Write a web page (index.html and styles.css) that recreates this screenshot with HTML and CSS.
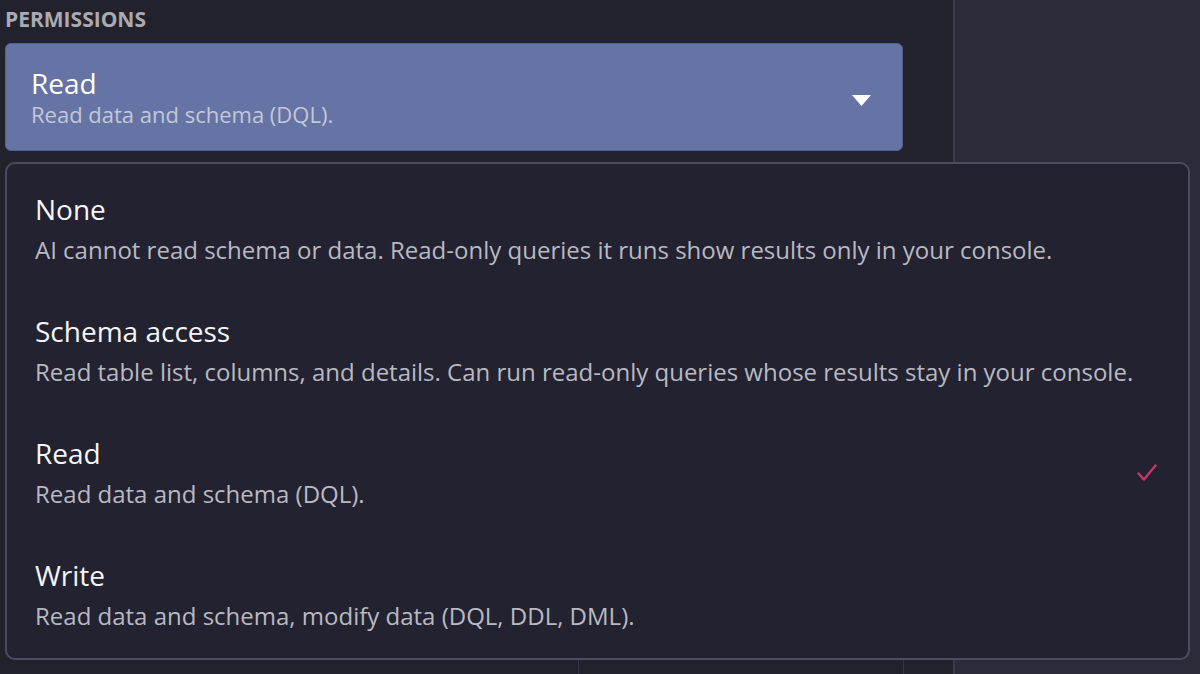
FILE: index.html
```html
<!DOCTYPE html>
<html lang="en">
<head>
<meta charset="utf-8">
<title>Permissions</title>
<link rel="stylesheet" href="styles.css">
</head>
<body>
<div class="page">
  <section class="left">
    <div class="label">PERMISSIONS</div>
    <div class="select">
      <div class="select-text">
        <div class="select-title">Read</div>
        <div class="select-desc">Read data and schema (DQL).</div>
      </div>
      <svg class="caret" width="19" height="11" viewBox="0 0 19 11"><path d="M0 0H19L9.5 11Z" fill="#ffffff"/></svg>
    </div>
    <div class="bg-rows">
      <div class="bg-cell a"></div>
      <div class="bg-cell b"></div>
      <div class="bg-cell c"></div>
    </div>
  </section>
  <section class="right"></section>

  <div class="menu">
    <div class="opt">
      <div class="opt-text">
        <div class="opt-title">None</div>
        <div class="opt-desc">AI cannot read schema or data. Read-only queries it runs show results only in your console.</div>
      </div>
    </div>
    <div class="opt">
      <div class="opt-text">
        <div class="opt-title">Schema access</div>
        <div class="opt-desc">Read table list, columns, and details. Can run read-only queries whose results stay in your console.</div>
      </div>
    </div>
    <div class="opt selected">
      <div class="opt-text">
        <div class="opt-title">Read</div>
        <div class="opt-desc">Read data and schema (DQL).</div>
      </div>
      <svg class="check" width="20" height="18" viewBox="0 0 20 18"><path d="M1.5 9.5L7 15.5L18.5 1.5" fill="none" stroke="#c6386a" stroke-width="2.4" stroke-linecap="round" stroke-linejoin="round"/></svg>
    </div>
    <div class="opt">
      <div class="opt-text">
        <div class="opt-title">Write</div>
        <div class="opt-desc">Read data and schema, modify data (DQL, DDL, DML).</div>
      </div>
    </div>
  </div>
</div>
</body>
</html>
```

FILE: styles.css
```css
* { box-sizing: border-box; }
html, body {
  margin: 0;
  padding: 0;
  width: 1200px;
  height: 674px;
  overflow: hidden;
  background: #22222d;
  font-family: "Open Sans", "Noto Sans", sans-serif;
}
.page {
  position: relative;
  display: grid;
  grid-template-columns: 953px 1fr;
  height: 674px;
}
.left {
  background: #22222d;
  padding: 5px 0 0 5px;
  display: flex;
  flex-direction: column;
}
.right {
  background: #2a2c3a;
  border-left: 2px solid #3a3b4b;
}
.label {
  font-size: 21px;
  font-weight: 700;
  color: #aaaab3;
  line-height: 29px;
  margin-bottom: 9px;
}
.select {
  width: 898px;
  height: 108px;
  background: #6574a5;
  border: 1px solid #56628e;
  border-radius: 6px;
  display: flex;
  align-items: center;
  justify-content: space-between;
  padding: 0 31px 0 25px;
}
.select-text { display: flex; flex-direction: column; }
.select-title {
  font-size: 28px;
  line-height: 34px;
  color: #ffffff;
}
.select-desc {
  font-size: 22px;
  line-height: 28px;
  color: #c3c7d8;
}
.caret { margin-top: 6px; }
.bg-rows {
  margin-top: auto;
  height: 14px;
  display: grid;
  grid-template-columns: 573px 326px 1fr;
}
.bg-cell.b { border-left: 1px solid #34354a; border-right: 1px solid #34354a; }
.menu {
  position: absolute;
  left: 5px;
  top: 162px;
  width: 1185px;
  height: 498px;
  background: #222230;
  border: 2px solid #4b4c5d;
  border-radius: 10px;
  padding: 3px 0;
  display: flex;
  flex-direction: column;
}
.opt {
  display: flex;
  align-items: center;
  justify-content: space-between;
  padding: 24px 31px 24px 28px;
}
.opt-text { display: flex; flex-direction: column; gap: 8px; }
.opt-title {
  font-size: 28px;
  line-height: 36px;
  color: #f5f5f7;
}
.opt-desc {
  font-size: 24px;
  line-height: 30px;
  color: #b9b9c2;
}
.check { margin-top: 2px; }
```
